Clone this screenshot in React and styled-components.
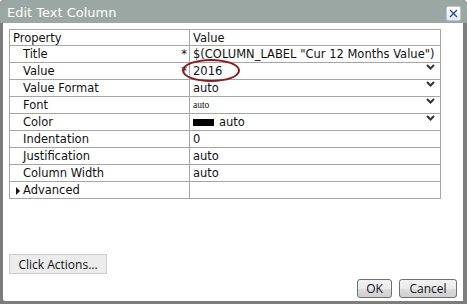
import React from "react";
import styled, { createGlobalStyle } from "styled-components";

const Global = createGlobalStyle`
  html, body { margin: 0; padding: 0; background: #fff; }
  body { font-family: "DejaVu Sans", Verdana, sans-serif; }
`;

const rows = [
  { name: "Title", star: true, value: '$(COLUMN_LABEL "Cur 12 Months Value")' },
  { name: "Value", star: true, value: "2016", drop: true, circled: true },
  { name: "Value Format", value: "auto", drop: true },
  { name: "Font", value: "auto", drop: true, small: true },
  { name: "Color", value: "auto", drop: true, swatch: true },
  { name: "Indentation", value: "0" },
  { name: "Justification", value: "auto" },
  { name: "Column Width", value: "auto" },
];

const Chevron = () => (
  <svg width="9" height="6" viewBox="0 0 9 6">
    <path d="M1 1 L4.5 4.5 L8 1" fill="none" stroke="#333" strokeWidth="2" />
  </svg>
);

const CloseIcon = () => (
  <svg width="9" height="9" viewBox="0 0 9 9">
    <path d="M1 1 L8 8 M8 1 L1 8" stroke="#2a4a9a" strokeWidth="1.4" />
  </svg>
);

const CaretIcon = () => (
  <svg width="4" height="8" viewBox="0 0 4 8">
    <path d="M0 0 L4 4 L0 8 Z" fill="#111" />
  </svg>
);

export default function App() {
  return (
    <>
      <Global />
      <Dialog>
        <TitleBar>
          <TitleText>Edit Text Column</TitleText>
          <CloseBtn><CloseIcon /></CloseBtn>
        </TitleBar>
        <Body>
          <Grid>
            <thead>
              <tr>
                <HeadCell>Property</HeadCell>
                <HeadCell>Value</HeadCell>
              </tr>
            </thead>
            <tbody>
              {rows.map((r) => (
                <tr key={r.name}>
                  <NameCell>
                    {r.name}
                    {r.star && <Star>*</Star>}
                  </NameCell>
                  <ValueCell $small={r.small}>
                    {r.swatch && <Swatch />}
                    {r.value}
                    {r.drop && <Drop><Chevron /></Drop>}
                    {r.circled && <Ellipse />}
                  </ValueCell>
                </tr>
              ))}
              <tr>
                <NameCell $group>
                  <Caret><CaretIcon /></Caret>Advanced
                </NameCell>
                <ValueCell />
              </tr>
            </tbody>
          </Grid>
          <Spacer />
          <ActionButton>Click Actions...</ActionButton>
          <Footer>
            <DialogButton $w={35}>OK</DialogButton>
            <DialogButton $w={58}>Cancel</DialogButton>
          </Footer>
        </Body>
      </Dialog>
    </>
  );
}

const Dialog = styled.div`
  width: 467px;
  height: 304px;
  box-sizing: border-box;
  background: #7d7d7d;
  border-radius: 4px 4px 0 0;
  display: flex;
  flex-direction: column;
  padding: 0 4px 3px 3px;
  overflow: hidden;
`;

const TitleBar = styled.div`
  height: 23px;
  margin: 0 -4px 0 -3px;
  padding: 0 6px 0 7px;
  background: #9ba7a2;
  border-radius: 5px 5px 0 0;
  display: flex;
  align-items: center;
  justify-content: space-between;
`;

const TitleText = styled.div`
  color: #fff;
  font-size: 13px;
  padding-top: 1px;
`;

const CloseBtn = styled.div`
  width: 13px;
  height: 13px;
  margin-top: 3px;
  background: linear-gradient(#ffffff, #e6ecf5);
  border: 1px solid #b9c6dc;
  border-radius: 2px;
  display: flex;
  align-items: center;
  justify-content: center;
`;

const Body = styled.div`
  flex: 1;
  background: #fff;
  display: flex;
  flex-direction: column;
  padding: 6px 0 3px 6px;
  border-radius: 0 0 0 2px;
`;

const Grid = styled.table`
  width: 432px;
  border-collapse: collapse;
  font-size: 11.5px;
  color: #111;
  table-layout: fixed;
  td, th { border: 1px solid #a6a6a6; }
`;

const HeadCell = styled.th`
  height: 15px;
  padding: 0 3px;
  text-align: left;
  font-weight: normal;
  &:first-child { width: 173px; }
`;

const NameCell = styled.td`
  position: relative;
  height: 16px;
  padding: 0 0 0 ${(p) => (p.$group ? 6 : 13)}px;
  line-height: 15px;
  white-space: nowrap;
`;

const Star = styled.span`
  position: absolute;
  right: 2px;
  top: 1px;
`;

const Caret = styled.span`
  display: inline-block;
  margin-right: 3px;
  line-height: 0;
  vertical-align: -1px;
`;

const ValueCell = styled.td`
  position: relative;
  height: 16px;
  padding: 0 0 0 3px;
  line-height: 15px;
  white-space: nowrap;
  font-size: ${(p) => (p.$small ? "9.5px" : "11.5px")};
  font-family: ${(p) =>
    p.$small ? '"Liberation Serif", serif' : '"DejaVu Sans", Verdana, sans-serif'};
`;

const Swatch = styled.span`
  display: inline-block;
  width: 21px;
  height: 7px;
  background: #000;
  margin-right: 5px;
  vertical-align: 0;
`;

const Drop = styled.span`
  position: absolute;
  right: 5px;
  top: 1px;
  line-height: 0;
`;

const Ellipse = styled.span`
  position: absolute;
  left: -8px;
  top: -4px;
  width: 54px;
  height: 19px;
  border: 2px solid #8a1c1c;
  border-radius: 50%;
  pointer-events: none;
`;

const Spacer = styled.div`
  flex: 1;
`;

const ActionButton = styled.div`
  align-self: flex-start;
  width: 98px;
  height: 20px;
  box-sizing: border-box;
  background: #ececec;
  border: 1px solid #cdcdcd;
  font-family: "Open Sans", "Liberation Sans", sans-serif;
  font-size: 12px;
  color: #111;
  display: flex;
  align-items: center;
  justify-content: center;
`;

const Footer = styled.div`
  display: flex;
  justify-content: flex-end;
  gap: 7px;
  padding: 5px 6px 0 0;
`;

const DialogButton = styled.div`
  width: ${(p) => p.$w}px;
  height: 19px;
  box-sizing: border-box;
  border: 1px solid #707070;
  border-radius: 3px;
  background: linear-gradient(#f2f2f2 0%, #ebebeb 50%, #dddddd 51%, #cfcfcf 100%);
  font-family: "Open Sans", "Liberation Sans", sans-serif;
  font-size: 12px;
  color: #111;
  display: flex;
  align-items: center;
  justify-content: center;
`;
